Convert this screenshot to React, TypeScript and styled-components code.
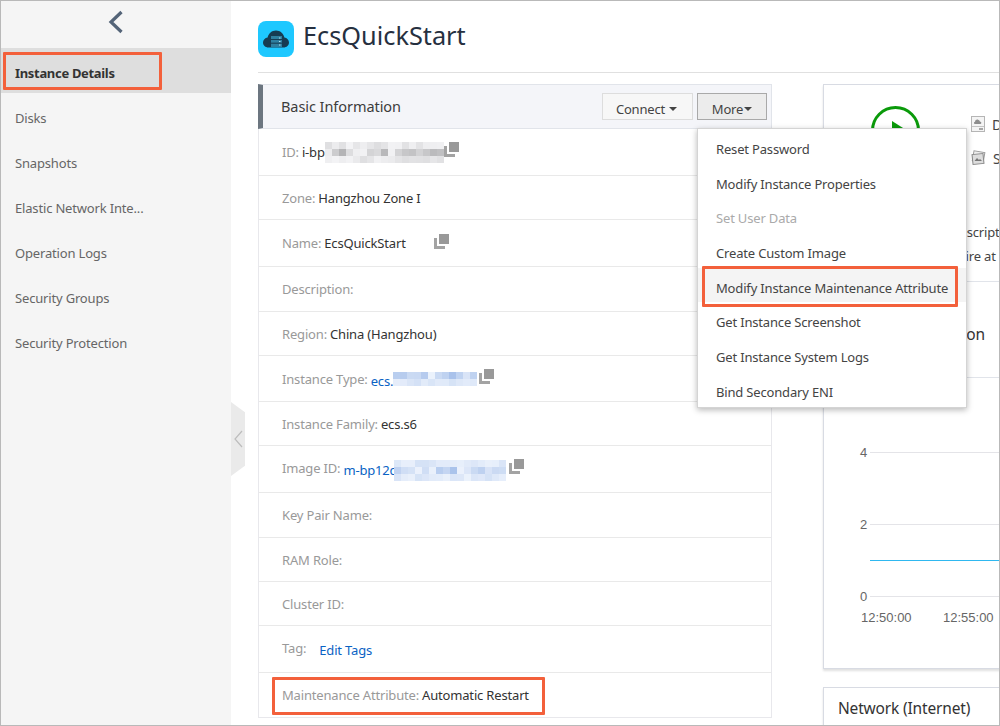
import React from "react";
import styled, { createGlobalStyle } from "styled-components";

const GlobalStyle = createGlobalStyle`
  html, body {
    margin: 0;
    padding: 0;
    background: #fff;
  }
  body {
    font-family: "Noto Sans", "Open Sans", sans-serif;
    font-size: 13px;
    letter-spacing: -0.17px;
    color: #333;
  }
`;

const Frame = styled.div`
  box-sizing: border-box;
  width: 1000px;
  height: 726px;
  border: 1px solid #b9b9b9;
  display: flex;
  overflow: hidden;
`;

const SideBar = styled.nav`
  width: 230px;
  flex: none;
  background: #f5f5f5;
`;

const BackRow = styled.div`
  height: 47px;
  display: flex;
  justify-content: center;
  padding-top: 9px;
  box-sizing: border-box;
`;

const SideItem = styled.div<{ $active?: boolean }>`
  position: relative;
  box-sizing: border-box;
  height: 45px;
  display: flex;
  align-items: center;
  padding: 4px 0 0 14px;
  color: ${(props) => (props.$active ? "#333" : "#666")};
  font-weight: ${(props) => (props.$active ? 700 : 400)};
  letter-spacing: ${(props) => (props.$active ? "-0.32px" : "-0.17px")};
  background: ${(props) => (props.$active ? "#dedede" : "transparent")};
`;

const Highlight = styled.span<{ $left: number; $top: number; $width: number; $height: number }>`
  position: absolute;
  z-index: 1;
  box-sizing: border-box;
  left: ${(props) => props.$left}px;
  top: ${(props) => props.$top}px;
  width: ${(props) => props.$width}px;
  height: ${(props) => props.$height}px;
  border: 3px solid #f3603b;
  border-radius: 1px;
  pointer-events: none;
`;

const Main = styled.main`
  position: relative;
  flex: 1;
  min-width: 0;
  padding-left: 27px;
  overflow: hidden;
`;

const CollapseTab = styled.div`
  position: absolute;
  left: 0;
  top: 401px;
  width: 14px;
  height: 74px;
  background: #eaeaea;
  clip-path: polygon(0 0, 100% 14%, 100% 86%, 0 100%);
  display: flex;
  align-items: center;
  justify-content: center;
`;

const TitleBar = styled.header`
  box-sizing: border-box;
  height: 72px;
  padding-top: 20px;
  display: flex;
  align-items: flex-start;
  gap: 9px;
  border-bottom: 1px solid #e0e0e0;
`;

const Title = styled.h1`
  margin: 0;
  font-size: 25.3px;
  line-height: 29px;
  font-weight: 400;
  letter-spacing: 0;
  color: #263040;
`;

const Columns = styled.div`
  display: flex;
  align-items: flex-start;
  gap: 51px;
  margin-top: 11px;
`;

const InfoPanel = styled.section`
  box-sizing: border-box;
  width: 514px;
  flex: none;
  border: 1px solid #e8e8ec;
  border-top: 0;
`;

const PanelHead = styled.div`
  box-sizing: border-box;
  height: 45px;
  margin-left: -1px;
  margin-right: -1px;
  display: flex;
  align-items: center;
  justify-content: space-between;
  padding: 0 4px 0 18px;
  background: #f4f5f9;
  border: 1px solid #e1e4ea;
  border-left: 5px solid #6c7680;
`;

const PanelTitle = styled.span`
  font-size: 14.5px;
  letter-spacing: -0.06px;
  padding-bottom: 2px;
  color: #3c3c3c;
`;

const HeadActions = styled.div`
  display: flex;
  gap: 4px;
`;

const ActionButton = styled.button<{ $open?: boolean }>`
  box-sizing: border-box;
  height: 27px;
  padding: 4px ${(props) => (props.$open ? 0 : 2)}px 0 0;
  display: flex;
  align-items: center;
  justify-content: center;
  gap: ${(props) => (props.$open ? 1 : 4)}px;
  font: inherit;
  letter-spacing: inherit;
  color: #444;
  background: ${(props) => (props.$open ? "#ececec" : "#f7f7f7")};
  border: 1px solid ${(props) => (props.$open ? "#a9a9a9" : "#dddddd")};
  width: ${(props) => (props.$open ? 70 : 91)}px;
`;

const Caret = styled.i`
  width: 0;
  height: 0;
  border-left: 4px solid transparent;
  border-right: 4px solid transparent;
  border-top: 4px solid #444;
`;

const MoreWrap = styled.div`
  position: relative;
`;

const Menu = styled.ul`
  position: absolute;
  z-index: 5;
  top: 35px;
  left: 0;
  box-sizing: border-box;
  width: 270px;
  margin: 0;
  padding: 0;
  list-style: none;
  background: #fff;
  border: 1px solid #d4d4d4;
  box-shadow: 0 2px 6px rgba(0, 0, 0, 0.28);
`;

const MenuItem = styled.li<{ $disabled?: boolean; $hover?: boolean }>`
  position: relative;
  box-sizing: border-box;
  height: 34.7px;
  display: flex;
  align-items: center;
  padding: 5px 0 0 18px;
  white-space: nowrap;
  color: ${(props) => (props.$disabled ? "#aaa" : "#444")};
  background: ${(props) => (props.$hover ? "#f4f4f4" : "#fff")};
`;

const Row = styled.div<{ $height: number; $lift?: number }>`
  position: relative;
  box-sizing: border-box;
  height: ${(props) => props.$height}px;
  display: flex;
  align-items: center;
  padding: 0 0 ${(props) => props.$lift ?? 0}px 23px;
  border-bottom: 1px solid #e9e9e9;
  white-space: nowrap;

  &:last-child {
    border-bottom: 0;
  }
`;

const Label = styled.span`
  color: #999;
  margin-right: 3px;
`;

const Value = styled.span`
  color: #333;
`;

const LinkText = styled.a<{ $gap?: number }>`
  color: #0a63c4;
  text-decoration: none;
  padding-top: 4px;
  margin-left: ${(props) => props.$gap ?? 0}px;
`;

const MosaicGrid = styled.span<{ $cols: number; $drop: number; $pull: number }>`
  display: inline-grid;
  grid-template-columns: repeat(${(props) => props.$cols}, 7px);
  grid-auto-rows: 7px;
  margin-top: ${(props) => props.$drop}px;
  margin-left: ${(props) => props.$pull}px;
`;

const CopyBox = styled.svg<{ $gap?: number; $rise?: number }>`
  width: 15px;
  height: 15px;
  flex: none;
  margin-left: ${(props) => props.$gap ?? 0}px;
  margin-bottom: ${(props) => props.$rise ?? 0}px;
`;

const SideColumn = styled.div`
  width: 320px;
  flex: none;
  display: flex;
  flex-direction: column;
  gap: 18px;
`;

const Card = styled.section`
  border: 1px solid #d8dbe3;
  box-shadow: 0 2px 2px rgba(0, 0, 0, 0.12);
`;

const StatusSection = styled.div`
  box-sizing: border-box;
  height: 197px;
  padding: 21px 0 0 47px;
  border-bottom: 1px solid #e1e4ea;
`;

const StatusTop = styled.div`
  display: flex;
  gap: 51px;
  height: 117px;
`;

const StatusFacts = styled.div`
  display: flex;
  flex-direction: column;
  gap: 18px;
  padding-top: 10px;
`;

const Fact = styled.div`
  display: flex;
  align-items: center;
  gap: 7px;
  height: 16px;
  font-size: 14px;
  color: #444;
`;

const StatusLines = styled.div`
  display: flex;
  flex-direction: column;
  gap: 6px;
  padding-left: 73px;
  color: #444;
  line-height: 18px;
  white-space: nowrap;
`;

const SectionTitle = styled.div<{ $height: number }>`
  box-sizing: border-box;
  height: ${(props) => props.$height}px;
  display: flex;
  align-items: center;
  padding: 0 0 2px 14px;
  font-size: 15.5px;
  color: #333;
`;

const MonitorTitle = styled(SectionTitle)`
  padding-top: 10px;
  border-bottom: 1px solid #e1e4ea;
`;

const ChartSvg = styled.svg`
  display: block;
  font-family: "Liberation Sans", Arial, sans-serif;
  font-size: 13px;
  letter-spacing: 0;
  fill: #666;

  line {
    shape-rendering: crispEdges;
  }
`;

const hash = (seed: number, i: number) => {
  const x = Math.sin(seed * 37.7 + i * 12.9898) * 43758.5453;
  return x - Math.floor(x);
};

type MosaicProps = {
  cols: number;
  rows: number;
  seed: number;
  blue?: boolean;
  drop?: number;
  pull?: number;
};

const Mosaic = ({ cols, rows, seed, blue, drop = 0, pull = 0 }: MosaicProps) => {
  const cells = Array.from({ length: cols * rows }, (_, i) => {
    const row = Math.floor(i / cols);
    const middle = (row > 0 && row < rows - 1) || (rows === 2 && row === 0);
    const v = hash(seed, i) * (middle ? 1 : 0.35);
    if (blue) {
      return `rgb(${Math.round(236 - v * 70)}, ${Math.round(242 - v * 50)}, ${Math.round(252 - v * 18)})`;
    }
    const g = Math.round(244 - v * 70);
    return `rgb(${g}, ${g}, ${g + 2})`;
  });
  return (
    <MosaicGrid $cols={cols} $drop={drop} $pull={pull}>
      {cells.map((c, i) => (
        <span key={i} style={{ background: c }} />
      ))}
    </MosaicGrid>
  );
};

const CopyIcon = ({ gap, rise }: { gap?: number; rise?: number }) => (
  <CopyBox viewBox="0 0 15 15" $gap={gap} $rise={rise}>
    <rect x="5" y="0" width="10" height="10" fill="#999" />
    <path d="M0 4h3v8h8v3H0z" fill="#a3a3a3" />
  </CopyBox>
);

const EcsLogo = () => (
  <svg width="36" height="36" viewBox="0 0 36 36">
    <rect width="36" height="36" rx="8" fill="#1ec8ff" />
    <path
      d="M10.5 26.5c-3.2 0-5.5-2.3-5.5-5 0-2.6 2-4.7 4.6-5 .9-4.2 4.3-7 8.4-7s7.500 2.800 8.400 7c2.600.300 4.600 2.400 4.600 5 0 2.700-2.300 5-5.500 5z"
      fill="#163c52"
    />
    <rect x="13" y="15" width="11" height="11" fill="#2e7f9f" />
    <path d="M13 18.500h11M13 22.200h11" stroke="#163c52" strokeWidth="1" />
    <path d="M21 17h1.500M21 20.500h1.500M21 24h1.500" stroke="#b8e4f2" strokeWidth="1" />
  </svg>
);

const DiskIcon = () => (
  <svg width="14" height="16" viewBox="0 0 14 16">
    <rect x="0.500" y="0.500" width="13" height="15" fill="#f4f4f4" stroke="#b5b5b5" />
    <path d="M4 8c-1.200 0-1.600-2 0-2.300C4.300 4 6 3 7.500 4c1 .300 1.300 1 1.400 1.600C10.800 5.800 10.700 8 9.500 8z" fill="#8d8d8d" />
    <path d="M1 10.500h12" stroke="#c4c4c4" />
    <path d="M8 13h4" stroke="#8d8d8d" strokeWidth="1.500" />
  </svg>
);

const SnapshotIcon = () => (
  <svg width="15" height="16" viewBox="0 0 15 16">
    <rect x="2" y="1.500" width="11" height="10" fill="#eee" stroke="#9a9a9a" transform="rotate(10 7 7)" />
    <rect x="1.500" y="4" width="11" height="10" fill="#ddd" stroke="#8a8a8a" transform="rotate(-6 7 9)" />
    <path d="M3.500 11l2.500-3 2 2 1-1 2 2z" fill="#777" />
  </svg>
);

const PlayStatus = () => (
  <svg width="49" height="49" viewBox="0 0 49 49">
    <circle cx="24.500" cy="24.500" r="23" fill="none" stroke="#0a9a0a" strokeWidth="3" />
    <path d="M21 15l15 9.500-15 9.500z" fill="#0a9a0a" />
  </svg>
);

const menuItems = [
  "Reset Password",
  "Modify Instance Properties",
  "Set User Data",
  "Create Custom Image",
  "Modify Instance Maintenance Attribute",
  "Get Instance Screenshot",
  "Get Instance System Logs",
  "Bind Secondary ENI",
];

const sideItems = [
  "Disks",
  "Snapshots",
  "Elastic Network Inte...",
  "Operation Logs",
  "Security Groups",
  "Security Protection",
];

const gridLines = [
  { label: "4", y: 74 },
  { label: "2", y: 146 },
  { label: "0", y: 218 },
];

const App = (): JSX.Element => (
  <Frame>
    <GlobalStyle />
    <SideBar>
      <BackRow>
        <svg width="16" height="24" viewBox="0 0 16 24">
          <path d="M13.500 2L3 12l10.500 10" fill="none" stroke="#546478" strokeWidth="3.200" />
        </svg>
      </BackRow>
      <SideItem $active>
        Instance Details
        <Highlight $left={2} $top={4} $width={159} $height={38} />
      </SideItem>
      {sideItems.map((item) => (
        <SideItem key={item}>{item}</SideItem>
      ))}
    </SideBar>
    <Main>
      <CollapseTab>
        <svg width="9" height="18" viewBox="0 0 9 18">
          <path d="M8 1L1 9l7 8" fill="none" stroke="#bdbdbd" strokeWidth="1.200" />
        </svg>
      </CollapseTab>
      <TitleBar>
        <EcsLogo />
        <Title>EcsQuickStart</Title>
      </TitleBar>
      <Columns>
        <InfoPanel>
          <PanelHead>
            <PanelTitle>Basic Information</PanelTitle>
            <HeadActions>
              <ActionButton>
                Connect <Caret />
              </ActionButton>
              <MoreWrap>
                <ActionButton $open>
                  <span>More</span>
                  <Caret />
                </ActionButton>
                <Menu>
                  {menuItems.map((item, i) => (
                    <MenuItem key={item} $disabled={i === 2} $hover={i === 4}>
                      {item}
                      {i === 4 && <Highlight $left={4} $top={-2} $width={256} $height={41} />}
                    </MenuItem>
                  ))}
                </Menu>
              </MoreWrap>
            </HeadActions>
          </PanelHead>
          <Row $height={47}>
            <Label>ID:</Label>
            <Value>i-bp</Value>
            <Mosaic cols={17} rows={3} seed={1} />
            <CopyIcon rise={6} />
          </Row>
          <Row $height={44}>
            <Label>Zone:</Label>
            <Value>Hangzhou Zone I</Value>
          </Row>
          <Row $height={47}>
            <Label>Name:</Label>
            <Value>EcsQuickStart</Value>
            <CopyIcon gap={28} rise={3} />
          </Row>
          <Row $height={45}>
            <Label>Description:</Label>
          </Row>
          <Row $height={44}>
            <Label>Region:</Label>
            <Value>China (Hangzhou)</Value>
          </Row>
          <Row $height={46}>
            <Label>Instance Type:</Label>
            <LinkText>ecs.</LinkText>
            <Mosaic cols={12} rows={2} seed={2} blue />
            <CopyIcon gap={2} rise={4} />
          </Row>
          <Row $height={44}>
            <Label>Instance Family:</Label>
            <Value>ecs.s6</Value>
          </Row>
          <Row $height={47} $lift={2}>
            <Label>Image ID:</Label>
            <LinkText>m-bp12c</LinkText>
            <Mosaic cols={16} rows={3} seed={3} blue drop={4} pull={-2} />
            <CopyIcon gap={3} rise={4} />
          </Row>
          <Row $height={45}>
            <Label>Key Pair Name:</Label>
          </Row>
          <Row $height={44}>
            <Label>RAM Role:</Label>
          </Row>
          <Row $height={44}>
            <Label>Cluster ID:</Label>
          </Row>
          <Row $height={47} $lift={2}>
            <Label>Tag:</Label>
            <LinkText $gap={10}>Edit Tags</LinkText>
          </Row>
          <Row $height={44}>
            <Label>Maintenance Attribute:</Label>
            <Value>Automatic Restart</Value>
            <Highlight $left={13} $top={4} $width={273} $height={38} />
          </Row>
        </InfoPanel>
        <SideColumn>
          <Card>
            <StatusSection>
              <StatusTop>
                <PlayStatus />
                <StatusFacts>
                  <Fact>
                    <DiskIcon />
                    Disks: 1
                  </Fact>
                  <Fact>
                    <SnapshotIcon />
                    Snapshots: 0
                  </Fact>
                </StatusFacts>
              </StatusTop>
              <StatusLines>
                <span>Subscription</span>
                <span>Expire at</span>
              </StatusLines>
            </StatusSection>
            <MonitorTitle $height={96}>Monitor Information</MonitorTitle>
            <ChartSvg width="318" height="290" viewBox="0 0 318 290">
              {gridLines.map((g) => (
                <g key={g.label}>
                  <line x1="46" x2="318" y1={g.y} y2={g.y} stroke="#e4e4e8" />
                  <text x="36" y={g.y + 5}>
                    {g.label}
                  </text>
                </g>
              ))}
              <line x1="46" x2="318" y1="182" y2="182" stroke="#2fb8f0" />
              <text x="37" y="244">12:50:00</text>
              <text x="119" y="244">12:55:00</text>
            </ChartSvg>
          </Card>
          <Card>
            <SectionTitle $height={42}>Network (Internet)</SectionTitle>
          </Card>
        </SideColumn>
      </Columns>
    </Main>
  </Frame>
);

export default App;
